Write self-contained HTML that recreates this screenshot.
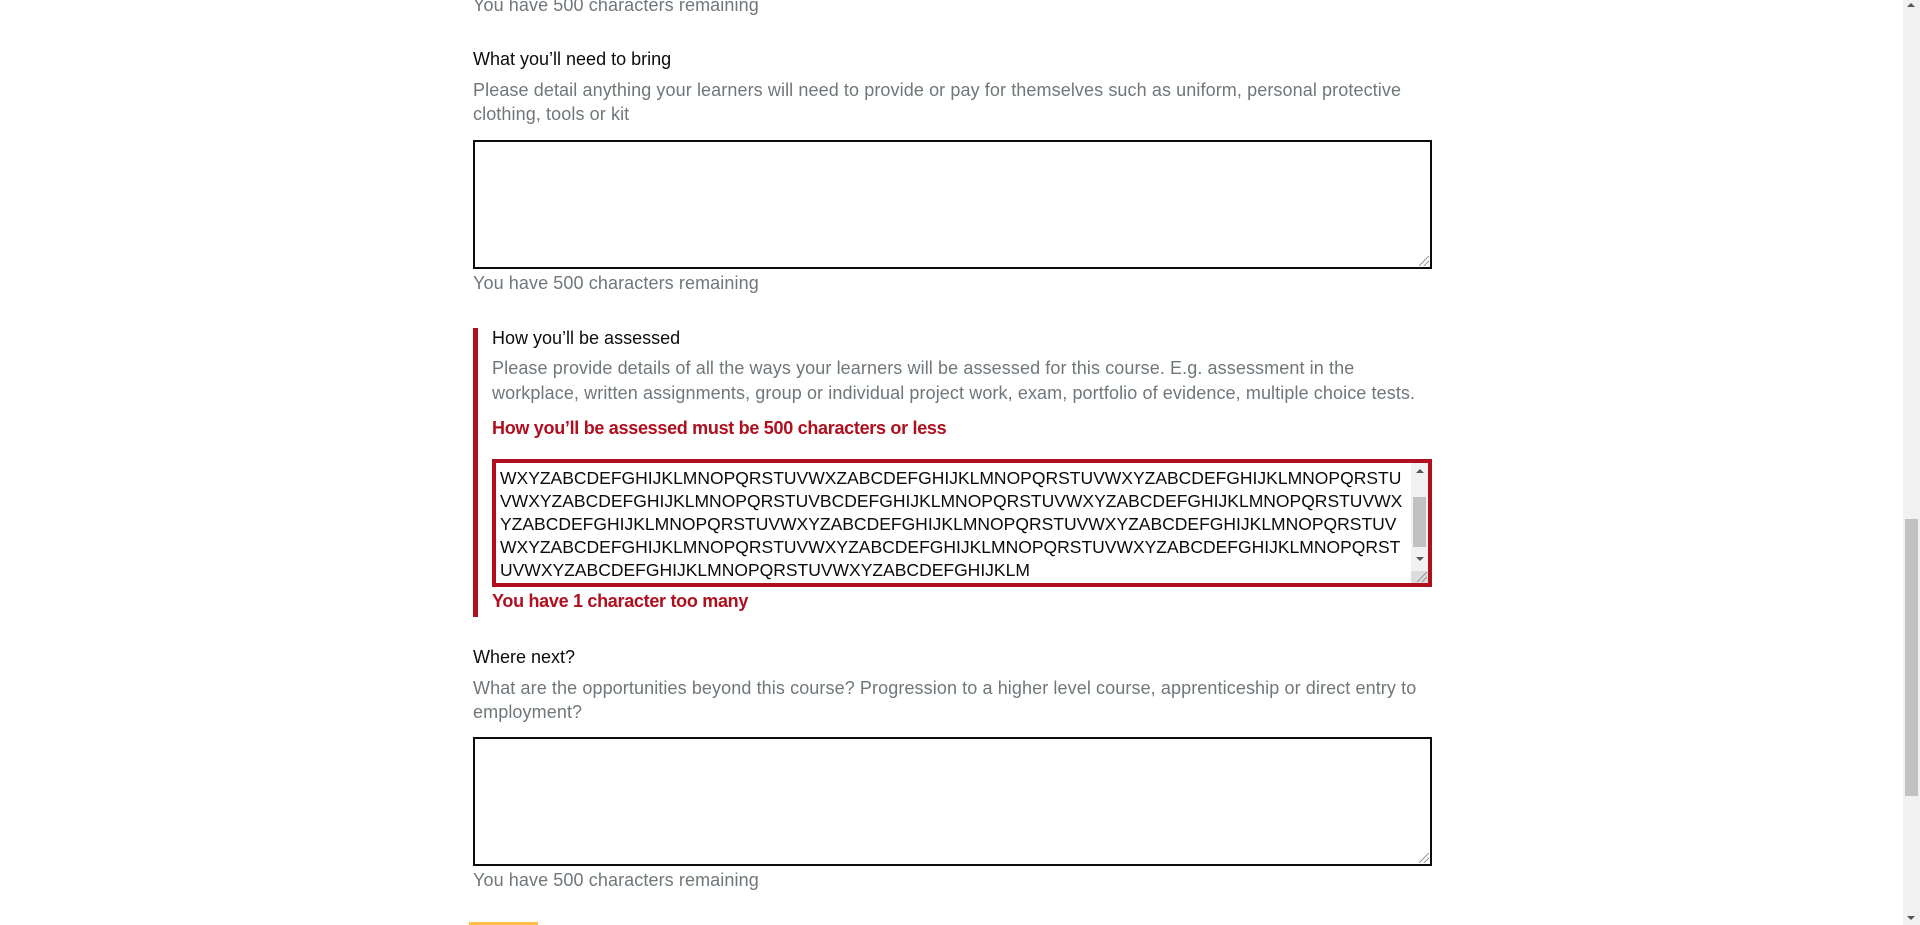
<!DOCTYPE html>
<html><head><meta charset="utf-8"><style>
html,body{margin:0;padding:0;width:1920px;height:925px;overflow:hidden;background:#fff;font-family:"Liberation Sans",sans-serif;}
.a{position:absolute;white-space:nowrap;}
.lab{font-size:18px;color:#0b0c0c;}
.hint{font-size:18px;color:#6f777b;letter-spacing:0.1px;}
.err{font-size:18px;color:#b10e1e;font-weight:bold;letter-spacing:-0.3px;}
.ta{position:absolute;box-sizing:border-box;border:2px solid #0b0c0c;background:#fff;}
.grip{position:absolute;right:1px;bottom:1px;width:10px;height:10px;background:linear-gradient(135deg,transparent 45%,#888 46%,#888 52%,transparent 53%,transparent 70%,#888 71%,#888 77%,transparent 78%);}
</style></head><body>
<div class="a hint" style="left:473px;top:-5px;">You have 500 characters remaining</div>
<div class="a lab" style="left:473px;top:49px;">What you’ll need to bring</div>
<div class="a hint" style="left:473px;top:80px;">Please detail anything your learners will need to provide or pay for themselves such as uniform, personal protective</div>
<div class="a hint" style="left:473px;top:104px;">clothing, tools or kit</div>
<div class="ta" style="left:473px;top:140px;width:959px;height:129px;"><div class="grip"></div></div>
<div class="a hint" style="left:473px;top:273px;">You have 500 characters remaining</div>

<div style="position:absolute;left:473px;top:328px;width:5px;height:289px;background:#b10e1e;"></div>
<div class="a lab" style="left:492px;top:328px;">How you’ll be assessed</div>
<div class="a hint" style="left:492px;top:358px;">Please provide details of all the ways your learners will be assessed for this course. E.g. assessment in the</div>
<div class="a hint" style="left:492px;top:383px;">workplace, written assignments, group or individual project work, exam, portfolio of evidence, multiple choice tests.</div>
<div class="a err" style="left:492px;top:418px;">How you’ll be assessed must be 500 characters or less</div>
<div class="ta" style="left:492px;top:459px;width:940px;height:128px;border:4px solid #b10e1e;overflow:hidden;">
<div style="position:absolute;left:4px;top:4px;font-size:17.5px;line-height:23px;color:#0b0c0c;white-space:pre;letter-spacing:0px;">WXYZABCDEFGHIJKLMNOPQRSTUVWXZABCDEFGHIJKLMNOPQRSTUVWXYZABCDEFGHIJKLMNOPQRSTU
VWXYZABCDEFGHIJKLMNOPQRSTUVBCDEFGHIJKLMNOPQRSTUVWXYZABCDEFGHIJKLMNOPQRSTUVWX
YZABCDEFGHIJKLMNOPQRSTUVWXYZABCDEFGHIJKLMNOPQRSTUVWXYZABCDEFGHIJKLMNOPQRSTUV
WXYZABCDEFGHIJKLMNOPQRSTUVWXYZABCDEFGHIJKLMNOPQRSTUVWXYZABCDEFGHIJKLMNOPQRST
UVWXYZABCDEFGHIJKLMNOPQRSTUVWXYZABCDEFGHIJKLM</div>
<div style="position:absolute;right:0;top:0;width:17px;height:100%;background:#f1f1f1;">
<div style="position:absolute;left:5px;top:6px;border:4px solid transparent;border-bottom:4px solid #555;border-top:0;"></div>
<div style="position:absolute;left:2px;top:34px;width:13px;height:50px;background:#c1c1c1;"></div>
<div style="position:absolute;left:5px;top:94px;border:4px solid transparent;border-top:4px solid #555;border-bottom:0;"></div>
<div style="position:absolute;left:0;bottom:0;width:17px;height:12px;background:#ddd;"></div>
</div>
<div class="grip"></div>
</div>
<div class="a err" style="left:492px;top:591px;">You have 1 character too many</div>

<div class="a lab" style="left:473px;top:647px;">Where next?</div>
<div class="a hint" style="left:473px;top:678px;">What are the opportunities beyond this course? Progression to a higher level course, apprenticeship or direct entry to</div>
<div class="a hint" style="left:473px;top:702px;">employment?</div>
<div class="ta" style="left:473px;top:737px;width:959px;height:129px;"><div class="grip"></div></div>
<div class="a hint" style="left:473px;top:870px;">You have 500 characters remaining</div>
<div style="position:absolute;left:469px;top:922px;width:69px;height:3px;background:#ffbf47;"></div>

<div style="position:absolute;left:1903px;top:0;width:17px;height:925px;background:#f1f1f1;">
<div style="position:absolute;left:4px;top:3px;border:4px solid transparent;border-bottom:4px solid #555;border-top:0;"></div>
<div style="position:absolute;left:2px;top:519px;width:13px;height:277px;background:#c1c1c1;"></div>
<div style="position:absolute;left:4px;top:916px;border:4px solid transparent;border-top:4px solid #555;border-bottom:0;"></div>
</div>
</body></html>
